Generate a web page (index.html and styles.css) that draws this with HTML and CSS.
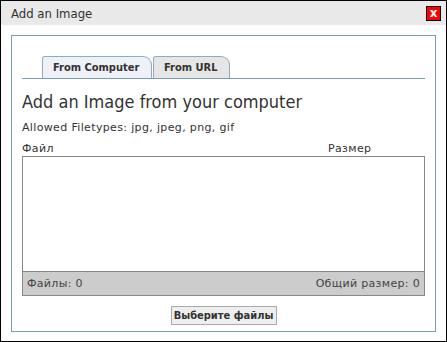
FILE: index.html
```html
<!DOCTYPE html>
<html>
<head>
<meta charset="utf-8">
<link rel="stylesheet" href="styles.css">
</head>
<body>
<div class="dialog">
  <div class="titlebar">
    <span class="title">Add an Image</span>
    <span class="close">x</span>
  </div>
  <div class="body">
    <div class="panel">
      <div class="tabs">
        <div class="tab active">From Computer</div>
        <div class="tab">From URL</div>
      </div>
      <h1 class="heading">Add an Image from your computer</h1>
      <div class="allowed">Allowed Filetypes: jpg, jpeg, png, gif</div>
      <div class="cols">
        <span>Файл</span>
        <span>Размер</span>
      </div>
      <div class="list">
        <div class="list-area"></div>
        <div class="list-foot">
          <span>Файлы: 0</span>
          <span>Общий размер: 0</span>
        </div>
      </div>
      <div class="actions">
        <button class="pick">Выберите файлы</button>
      </div>
    </div>
  </div>
</div>
</body>
</html>
```
FILE: styles.css
```css
html, body {
  margin: 0;
  padding: 0;
  background: #fff;
}
body {
  font-family: "DejaVu Sans", Verdana, sans-serif;
  color: #333;
}
.dialog {
  width: 447px;
  height: 342px;
  box-sizing: border-box;
  border: 1px solid #000;
  display: flex;
  flex-direction: column;
}
.titlebar {
  height: 24px;
  background: #e9e9e9;
  display: flex;
  align-items: center;
  justify-content: space-between;
  padding: 0 5px 0 10px;
}
.title {
  font-size: 13px;
  font-stretch: condensed;
  color: #333;
  line-height: 24px;
  padding-top: 1px;
}
.close {
  width: 13px;
  height: 13px;
  border: 1px solid #000;
  background: #f00;
  color: #fff;
  font-weight: bold;
  font-size: 12px;
  line-height: 12px;
  text-align: center;
}
.body {
  flex: 1;
  padding: 10px 10px 9px 10px;
  display: flex;
}
.panel {
  flex: 1;
  border: 1px solid #7a9cb1;
  padding: 20px 10px 0 10px;
  display: flex;
  flex-direction: column;
}
.tabs {
  display: flex;
  gap: 1px;
  padding-left: 20px;
  border-bottom: 1px solid #7a9cb1;
  height: 22px;
}
.tab {
  font-size: 11px;
  font-weight: bold;
  font-stretch: condensed;
  color: #333;
  line-height: 21px;
  height: 22px;
  box-sizing: border-box;
  padding: 0 10px 0 10px;
  border: 1px solid #8fabbf;
  border-bottom: none;
  border-radius: 3px 9px 0 0;
  background: #e6e6e6;
}
.tab.active {
  background: #eef1f7;
  width: 110px;
}
.tab:not(.active) {
  width: 77px;
}
.heading {
  margin: 13px 0 0 0;
  font-size: 18px;
  font-stretch: condensed;
  font-weight: normal;
  line-height: 20px;
  color: #333;
}
.allowed {
  margin-top: 9px;
  font-size: 11px;
  letter-spacing: 0.35px;
  line-height: 14px;
}
.cols {
  margin-top: 7px;
  font-size: 11px;
  letter-spacing: 0.35px;
  line-height: 14px;
  display: grid;
  grid-template-columns: 306px auto;
}
.list {
  height: 140px;
  box-sizing: border-box;
  border: 1px solid #888;
  display: flex;
  flex-direction: column;
}
.list-area {
  flex: 1;
  background: #fff;
}
.list-foot {
  height: 23px;
  background: #ccc;
  border-top: 1px solid #888;
  display: flex;
  justify-content: space-between;
  align-items: center;
  padding: 0 4px;
  font-size: 11px;
  letter-spacing: 0.33px;
  color: #444;
}
.actions {
  display: flex;
  justify-content: center;
  margin-top: 10px;
}
.pick {
  font-family: inherit;
  font-stretch: condensed;
  font-size: 11px;
  font-weight: bold;
  color: #333;
  background: #eee;
  border: 1px solid #aaa;
  height: 19px;
  width: 106px;
  padding: 0;
  margin: 0;
}
```
